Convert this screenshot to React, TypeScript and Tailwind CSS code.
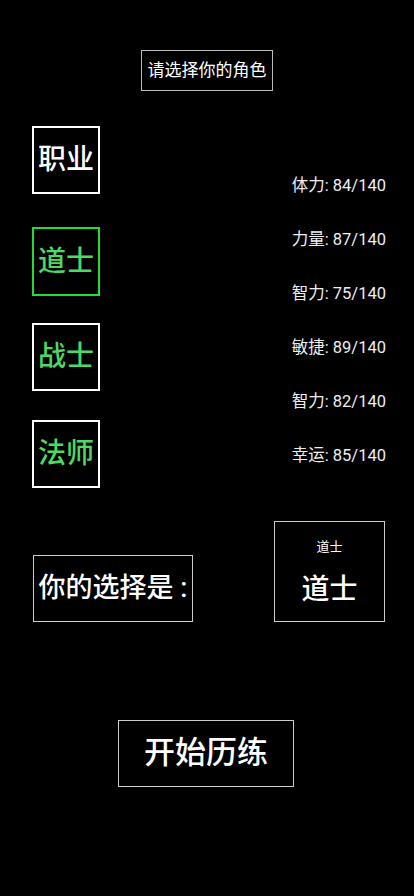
const font = { fontFamily: 'Roboto, "Noto Sans CJK SC", sans-serif' }

const classes = [
  { name: '道士', selected: true },
  { name: '战士', selected: false },
  { name: '法师', selected: false },
]

const stats = [
  ['体力', '84/140'],
  ['力量', '87/140'],
  ['智力', '75/140'],
  ['敏捷', '89/140'],
  ['智力', '82/140'],
  ['幸运', '85/140'],
]

export default function App() {
  return (
    <div className="w-[414px] h-[896px] bg-black text-white overflow-hidden" style={font}>
      <div className="flex justify-center pt-[50px]">
        <div className="w-[132px] h-[41px] border border-[#bbbbbb] flex items-center justify-center text-[17px]">
          请选择你的角色
        </div>
      </div>

      <div className="flex justify-between pl-[32px] pr-[28px] mt-[35px]">
        <div className="flex flex-col">
          <div className="w-[68px] h-[68px] border-2 border-white flex items-center justify-center text-[28px] font-medium">
            职业
          </div>
          {classes.map((c, i) => (
            <div
              key={c.name}
              className={
                c.selected
                  ? 'w-[68px] h-[69px] border-2 border-[#22dd33] flex items-center justify-center text-[28px] font-medium text-[#4cd964] mt-[33px]'
                  : 'w-[68px] h-[68px] border-2 border-white flex items-center justify-center text-[28px] font-medium text-[#4cd964] ' +
                    (i === 1 ? 'mt-[27px]' : 'mt-[29px]')
              }
            >
              {c.name}
            </div>
          ))}
        </div>
        <div className="flex flex-col items-end pt-[48px] gap-[30px] text-[16.5px] text-[#eeeeee]">
          {stats.map(([k, v], i) => (
            <div key={i} className="h-[24px] leading-[24px] whitespace-nowrap">
              {k}: {v}
            </div>
          ))}
        </div>
      </div>

      <div className="flex justify-between items-end pl-[33px] pr-[29px] mt-[33px]">
        <div className="w-[160px] h-[67px] border border-[#cccccc] flex items-center justify-center text-[27px] font-medium whitespace-nowrap">
          你的选择是 :
        </div>
        <div className="w-[111px] h-[101px] border border-[#cccccc] flex flex-col items-center">
          <div className="text-[13px] mt-[15px] leading-[20px]">道士</div>
          <div className="text-[28px] font-medium mt-[13px] leading-[40px]">道士</div>
        </div>
      </div>

      <div className="flex justify-center mt-[98px] pr-[2px]">
        <div className="w-[176px] h-[67px] border border-[#cccccc] flex items-center justify-center text-[31px] font-medium">
          开始历练
        </div>
      </div>
    </div>
  )
}
